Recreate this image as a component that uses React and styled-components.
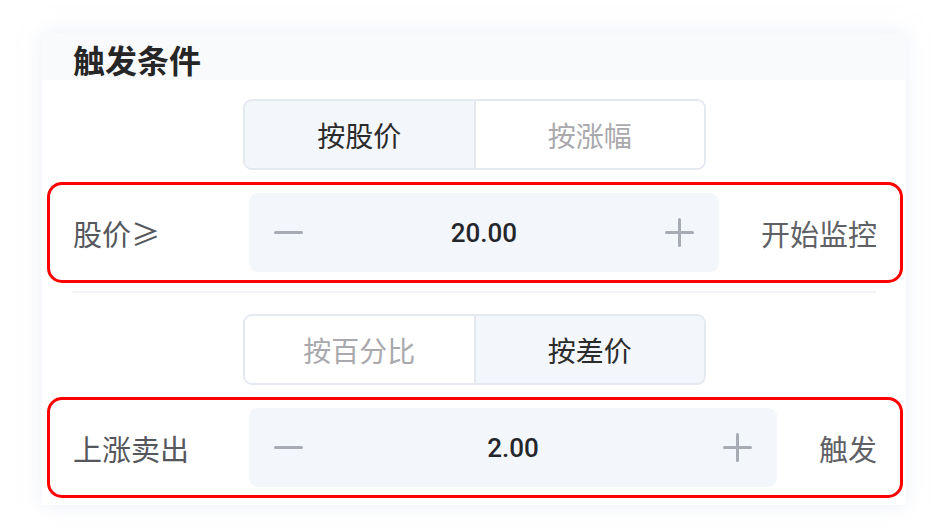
import React from 'react'
import styled, { createGlobalStyle } from 'styled-components'

const GlobalStyle = createGlobalStyle`
	html, body {
		margin: 0;
		padding: 0;
		background: #ffffff;
	}
	body {
		font-family: 'Noto Sans CJK SC', 'Noto Sans', sans-serif;
		color: #333;
	}
`

const conditions = [
	{
		modes: ['按股价', '按涨幅'],
		active: 0,
		label: '股价≥',
		value: '20.00',
		action: '开始监控',
	},
	{
		modes: ['按百分比', '按差价'],
		active: 1,
		label: '上涨卖出',
		value: '2.00',
		action: '触发',
	},
]

const MinusIcon = () => (
	<svg width='29' height='29' viewBox='0 0 29 29'>
		<line x1='1.5' y1='14.5' x2='27.5' y2='14.5' stroke='#a7abb4' strokeWidth='3' strokeLinecap='round' />
	</svg>
)

const PlusIcon = () => (
	<svg width='29' height='29' viewBox='0 0 29 29'>
		<line x1='1.5' y1='14.5' x2='27.5' y2='14.5' stroke='#a7abb4' strokeWidth='3' strokeLinecap='round' />
		<line x1='14.5' y1='1.5' x2='14.5' y2='27.5' stroke='#a7abb4' strokeWidth='3' strokeLinecap='round' />
	</svg>
)

const App = () => {
	return (
		<>
			<GlobalStyle />
			<Page>
				<Card>
					<Header>触发条件</Header>
					<Body>
						{conditions.map((c, i) => (
							<Section key={c.label}>
								{i > 0 && <Divider />}
								<Segmented>
									{c.modes.map((m, j) => (
										<Segment key={m} $active={j === c.active}>
											{m}
										</Segment>
									))}
								</Segmented>
								<Highlight>
									<Label>{c.label}</Label>
									<Stepper>
										<StepButton>
											<MinusIcon />
										</StepButton>
										<Value>{c.value}</Value>
										<StepButton>
											<PlusIcon />
										</StepButton>
									</Stepper>
									<Action>{c.action}</Action>
								</Highlight>
							</Section>
						))}
					</Body>
				</Card>
			</Page>
		</>
	)
}

const Page = styled.div`
	width: 936px;
	height: 528px;
	padding: 33px 30px 0 42px;
	box-sizing: border-box;
	overflow: hidden;
`

const Card = styled.div`
	width: 864px;
	background: #ffffff;
	box-shadow: 0 0 18px rgba(220, 226, 240, 0.55);
	padding-bottom: 7px;
`

const Header = styled.div`
	height: 47px;
	padding: 4px 0 0 31px;
	box-sizing: border-box;
	display: flex;
	align-items: center;
	background: #f9fafc;
	font-size: 32px;
	font-weight: 700;
	color: #262626;
`

const Body = styled.div`
	display: flex;
	flex-direction: column;
	padding: 19px 3px 0 5px;
`

const Section = styled.div`
	display: flex;
	flex-direction: column;
`

const Divider = styled.div`
	height: 2px;
	margin: 8px 27px 21px 26px;
	background: #f1f3f6;
`

const Segmented = styled.div`
	display: flex;
	width: 463px;
	height: 71px;
	margin-left: 196px;
	box-sizing: border-box;
	border: 2px solid #e4e9f0;
	border-radius: 9px;
	overflow: hidden;
`

const Segment = styled.div`
	flex: 1;
	display: flex;
	align-items: center;
	justify-content: center;
	font-size: 28px;
	color: ${(p) => (p.$active ? '#2b2b2b' : '#a9a9ad')};
	background: ${(p) => (p.$active ? '#f3f6fa' : '#ffffff')};

	& + & {
		border-left: 2px solid #e4e9f0;
	}
`

const Highlight = styled.div`
	display: flex;
	align-items: center;
	height: 101px;
	margin-top: 12px;
	padding: 0 23px 0 23px;
	box-sizing: border-box;
	border: 3px solid #ff0000;
	border-radius: 15px;
`

const Label = styled.div`
	width: 176px;
	flex-shrink: 0;
	font-size: 29px;
	color: #55575c;
`

const Stepper = styled.div`
	flex: 1;
	height: 79px;
	display: flex;
	align-items: center;
	justify-content: space-between;
	padding: 0 25px;
	border-radius: 9px;
	background: #f3f6fa;
`

const StepButton = styled.div`
	display: flex;
	width: 29px;
	height: 29px;
`

const Value = styled.div`
	font-family: Roboto, 'Noto Sans', sans-serif;
	font-size: 26px;
	font-weight: 500;
	color: #24262b;
`

const Action = styled.div`
	margin-left: 42px;
	font-size: 29px;
	color: #5f6166;
	white-space: nowrap;
`

export default App
